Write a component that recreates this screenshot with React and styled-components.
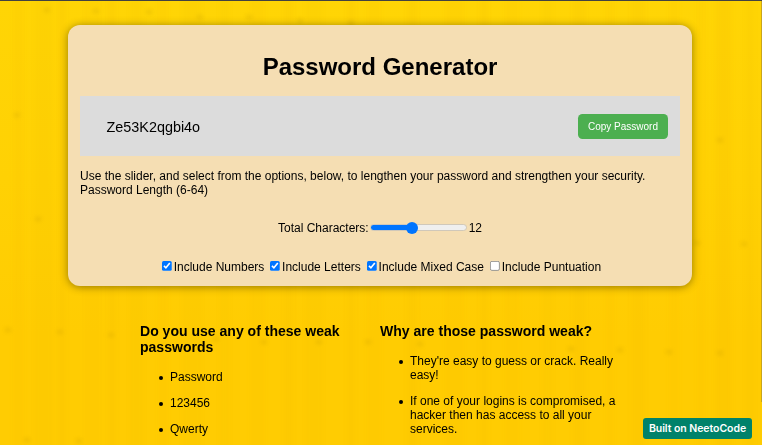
import React, { useState } from "react";
import styled, { createGlobalStyle } from "styled-components";

const GlobalStyle = createGlobalStyle`
  * { box-sizing: border-box; }
  html, body { margin: 0; height: 100%; overflow: hidden; }
  body { font: 12px/14px "Liberation Sans", Arial, sans-serif; color: #000; }
`;

const Page = styled.div`
  position: relative;
  height: 445px;
  overflow: hidden;
  border-top: 1px solid #424242;
  background: linear-gradient(#ffd505, #ffd104 40%, #ffcc02 75%, #ffcc02);
`;

const Backdrop = styled.svg`
  position: absolute;
  inset: 0;
  width: 762px;
  height: 444px;
`;

const Edge = styled.div`
  position: absolute;
  top: 0;
  right: 0;
  width: 1px;
  height: 401px;
  background: #c9a51c;
`;

const Card = styled.main`
  position: relative;
  width: 624px;
  height: 261px;
  margin: 24px 0 0 68px;
  padding: 12px;
  border-radius: 12px;
  background: #f5deb3;
  box-shadow: 0 1px 8px rgba(0, 0, 0, 0.42);
`;

const Title = styled.h1`
  margin: 16px 0;
  font-size: 24px;
  line-height: 27px;
  text-align: center;
`;

const Output = styled.div`
  display: flex;
  align-items: center;
  justify-content: space-between;
  height: 60px;
  margin-bottom: 13px;
  padding: 1px 12px 0 26.5px;
  background: #dcdcdc;
`;

const Password = styled.span`
  padding-top: 1px;
  font-size: 14.4px;
  line-height: 18px;
`;

const CopyButton = styled.button`
  width: 90px;
  height: 25px;
  padding: 0;
  border: 0;
  border-radius: 4.5px;
  background: #4caf50;
  color: #fff;
  font: 10px "Liberation Sans", Arial, sans-serif;
`;

const Help = styled.p`
  margin: 0;
`;

const LengthRow = styled.div`
  display: flex;
  justify-content: center;
  align-items: center;
  height: 14px;
  margin-top: 24px;
`;

const Slider = styled.input`
  appearance: none;
  width: 97px;
  height: 12px;
  margin: 0 2px 1px 1px;
  background: transparent;

  &::-webkit-slider-runnable-track {
    height: 7px;
    border: 1px solid #d0c8ba;
    border-radius: 4px;
    background: linear-gradient(to right, #0075ff ${({ value }) => value}%, #efefef 0) border-box;
  }

  &::-webkit-slider-thumb {
    appearance: none;
    width: 12px;
    height: 12px;
    margin-top: -3.5px;
    border-radius: 50%;
    background: #0075ff;
  }
`;

const Options = styled.div`
  display: flex;
  justify-content: center;
  gap: 6px;
  margin-top: 25px;
  padding-left: 3px;
`;

const Option = styled.label`
  display: flex;
  gap: 2px;
  white-space: nowrap;
`;

const Checkbox = styled.input`
  zoom: 0.75;
  width: 13px;
  height: 13px;
  margin: 1px 0 0;
`;

const Columns = styled.div`
  position: relative;
  display: flex;
  gap: 15px;
  margin: 37px 0 0 140px;
`;

const Column = styled.section`
  width: ${({ $wide }) => ($wide ? 240 : 225)}px;
`;

const Subtitle = styled.h3`
  margin: 0 0 15px;
  font-size: 14.04px;
  line-height: 16px;
`;

const List = styled.ul`
  margin: 0;
  padding: 0;
  list-style: none;
`;

const Item = styled.li`
  display: flex;
  margin-bottom: 12px;

  &::before {
    content: "";
    flex: none;
    width: 4px;
    height: 4px;
    margin: 6px 7px 0 19px;
    border-radius: 50%;
    background: #000;
  }
`;

const Badge = styled.a`
  position: absolute;
  right: 10px;
  bottom: 6px;
  width: 109px;
  height: 21px;
  border-radius: 3px;
  background: #00826a;
  color: #fff;
  font: 600 10.5px/21px Inter, sans-serif;
  letter-spacing: -0.05px;
  text-align: center;
  white-space: nowrap;
`;

const grain = [
  [13, 11, 0.2], [35, 17, 0.25], [58, 8, 0.3], [84, 16, 0.15],
  [108, 8, 0.3], [130, 13, 0.25], [158, 10, 0.2], [183, 18, 0.25],
  [220, 9, 0.25], [250, 15, 0.2], [284, 9, 0.3], [306, 16, 0.25],
  [347, 8, 0.3], [367, 14, 0.2], [407, 10, 0.3], [445, 19, 0.2],
  [480, 8, 0.3], [505, 14, 0.2], [543, 9, 0.25], [573, 13, 0.3],
  [606, 8, 0.2], [631, 14, 0.3], [669, 10, 0.2], [697, 8, 0.2],
  [716, 15, 0.35], [746, 8, 0.25],
];

const knots = [
  [47, 9], [96, 10], [149, 11], [200, 16], [249, 16], [300, 20], [351, 22],
  [17, 114], [38, 218], [8, 329], [60, 331], [111, 334], [264, 341],
  [319, 341], [368, 341], [420, 343], [216, 338], [571, 348], [620, 349],
  [669, 351], [720, 352], [720, 139], [744, 243], [27, 439], [79, 440],
  [697, 242],
];

const WoodGrain = () => (
  <Backdrop viewBox="0 0 762 444" aria-hidden="true">
    <defs>
      <filter id="soft" x="-5%" y="-5%" width="110%" height="110%" colorInterpolationFilters="sRGB">
        <feGaussianBlur stdDeviation="2" />
      </filter>
    </defs>
    <g filter="url(#soft)">
      {grain.map(([x, width, opacity]) => (
        <rect key={x} x={x} y="-6" width={width} height="460" fill="#f2bd00" opacity={opacity * 0.5} />
      ))}
      {knots.map(([x, y]) => (
        <ellipse key={`${x}-${y}`} cx={x} cy={y} rx="3.2" ry="2" fill="#a98500" opacity="0.22" />
      ))}
    </g>
  </Backdrop>
);

const weakPasswords = ["Password", "123456", "Qwerty"];

const reasons = [
  "They're easy to guess or crack. Really easy!",
  "If one of your logins is compromised, a hacker then has access to all your services.",
];

const options = [
  ["Include Numbers", true],
  ["Include Letters", true],
  ["Include Mixed Case", true],
  ["Include Puntuation", false],
];

export default function App() {
  const [position, setPosition] = useState(42.5);
  return (
    <Page>
      <GlobalStyle />
      <WoodGrain />
      <Edge />
      <Card>
        <Title>Password Generator</Title>
        <Output>
          <Password>Ze53K2qgbi4o</Password>
          <CopyButton type="button">Copy Password</CopyButton>
        </Output>
        <Help>
          Use the slider, and select from the options, below, to lengthen your password and strengthen your security.
          <br />
          Password Length (6-64)
        </Help>
        <LengthRow>
          <span>Total Characters:</span>
          <Slider
            type="range"
            min="0"
            max="100"
            step="0.5"
            value={position}
            onChange={(event) => setPosition(Number(event.target.value))}
            aria-label="Total Characters"
          />
          <span>12</span>
        </LengthRow>
        <Options>
          {options.map(([label, checked]) => (
            <Option key={label}>
              <Checkbox type="checkbox" defaultChecked={checked} />
              {label}
            </Option>
          ))}
        </Options>
      </Card>
      <Columns>
        <Column>
          <Subtitle>Do you use any of these weak passwords</Subtitle>
          <List>
            {weakPasswords.map((text) => <Item key={text}>{text}</Item>)}
          </List>
        </Column>
        <Column $wide>
          <Subtitle>Why are those password weak?</Subtitle>
          <List>
            {reasons.map((text) => <Item key={text}>{text}</Item>)}
          </List>
        </Column>
      </Columns>
      <Badge>Built on NeetoCode</Badge>
    </Page>
  );
}
